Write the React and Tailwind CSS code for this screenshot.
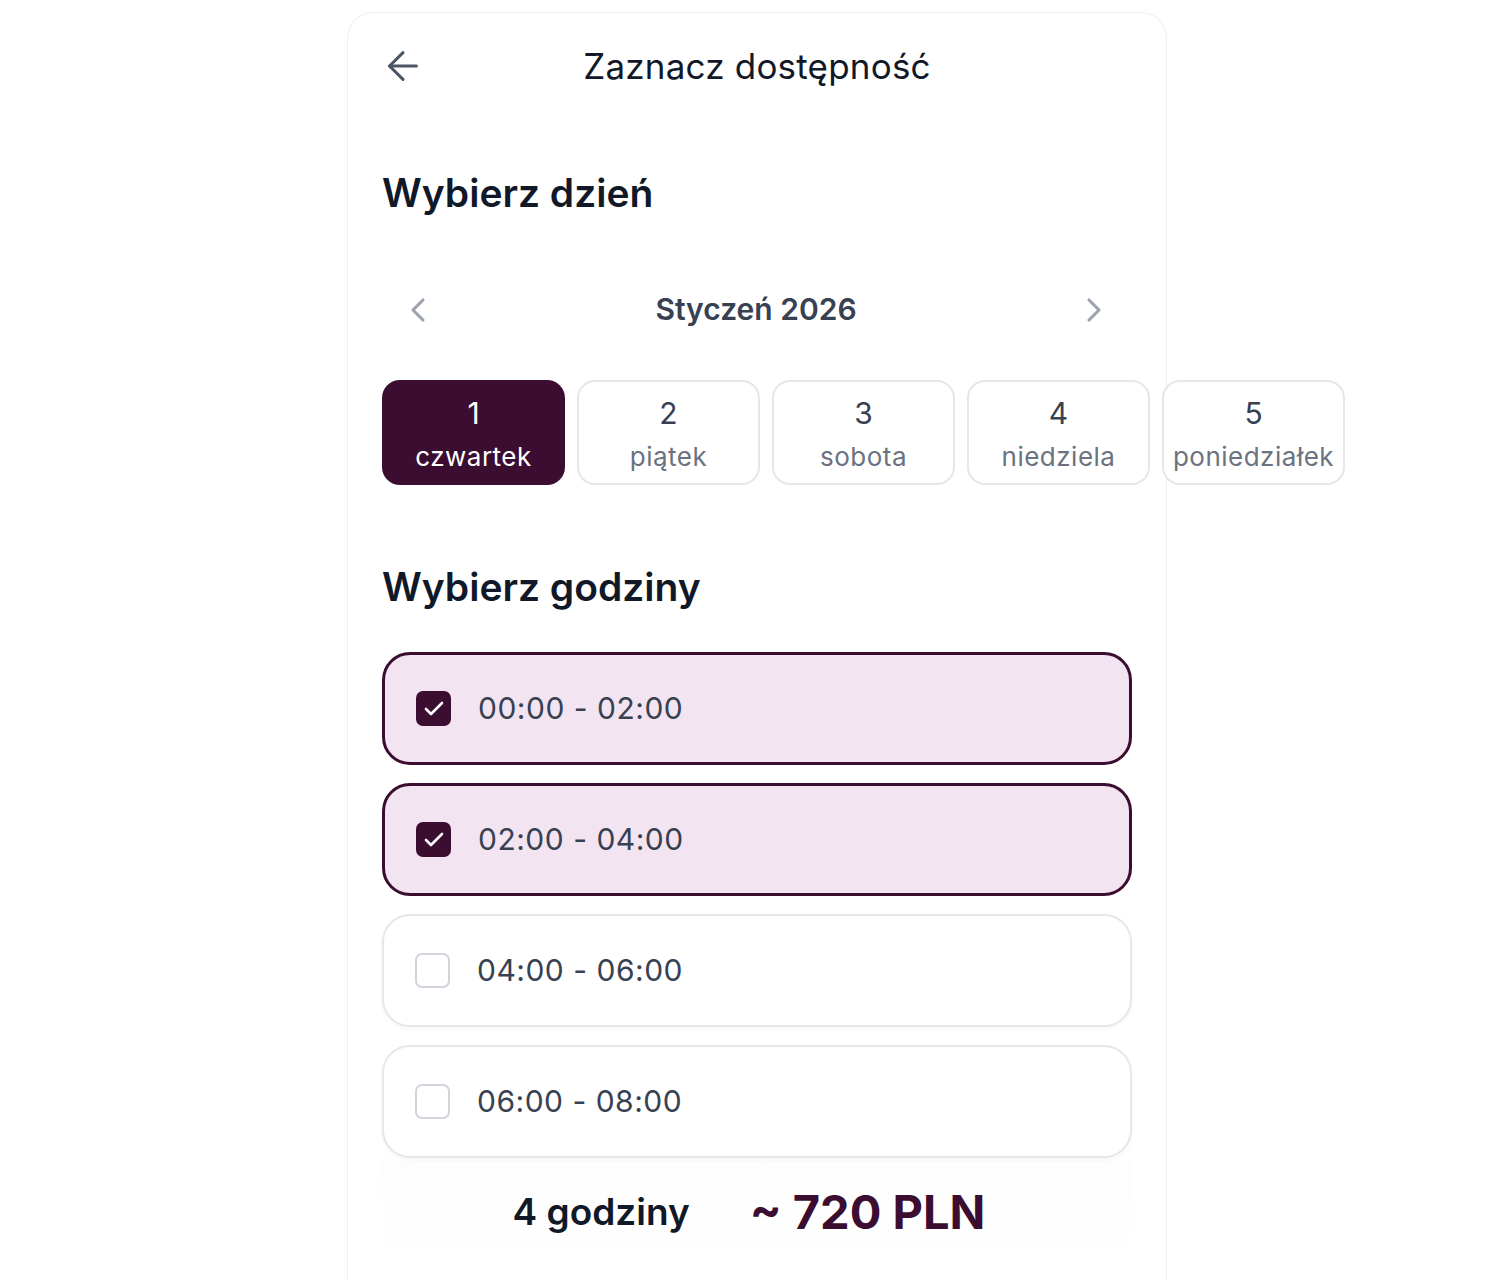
import React, { useState } from 'react';
import { ArrowLeft, ChevronLeft, ChevronRight, Check } from 'lucide-react';

const days = [
  { n: 1, name: 'czwartek' },
  { n: 2, name: 'piątek' },
  { n: 3, name: 'sobota' },
  { n: 4, name: 'niedziela' },
  { n: 5, name: 'poniedziałek' },
];

const slots = ['00:00 - 02:00', '02:00 - 04:00', '04:00 - 06:00', '06:00 - 08:00'];

const App = () => {
  const [selectedDay, setSelectedDay] = useState(1);
  const [checked, setChecked] = useState([0, 1]);

  const toggle = (i) => {
    setChecked((prev) => (prev.includes(i) ? prev.filter((x) => x !== i) : [...prev, i]));
  };

  return (
    <div className="h-[1281px] overflow-hidden bg-white font-['Inter','Noto_Sans',sans-serif]">
      <div className="ml-[347px] mt-3 w-[820px] h-[1300px] rounded-t-[26px] border border-b-0 border-[#efefef] bg-white px-[34px]">
        {/* header */}
        <header className="relative flex h-[106px] items-center justify-center">
          <button className="absolute left-[-2px] top-[30px] text-[#4b5563]">
            <ArrowLeft size={46} strokeWidth={1.6} />
          </button>
          <h1 className="text-[35px] text-[#111827] tracking-[0.2px]">Zaznacz dostępność</h1>
        </header>

        <h2 className="mt-[54px] text-[39px] font-semibold leading-none text-[#111827]">Wybierz dzień</h2>

        {/* month nav */}
        <div className="mt-[75px] flex items-center justify-between pl-[16px] pr-[18px]">
          <ChevronLeft size={40} strokeWidth={1.9} className="text-[#9ca3af]" />
          <span className="text-[30px] font-semibold text-[#374151]">Styczeń 2026</span>
          <ChevronRight size={40} strokeWidth={1.9} className="text-[#9ca3af]" />
        </div>

        {/* days */}
        <div className="mt-[48px] flex gap-[12px]">
          {days.map((d) => {
            const active = d.n === selectedDay;
            return (
              <button
                key={d.n}
                onClick={() => setSelectedDay(d.n)}
                className={`flex h-[105px] w-[183px] shrink-0 flex-col items-center justify-center rounded-[18px] ${
                  active ? 'bg-[#3b0d31] text-white' : 'border-2 border-[#e5e7eb] bg-white'
                }`}
              >
                <span className={`mt-[2px] text-[30px] leading-[40px] ${active ? 'text-white' : 'text-[#374151]'}`}>{d.n}</span>
                <span className={`mt-[7px] text-[26px] leading-[34px] tracking-[0.5px] ${active ? 'text-white' : 'text-[#6b7280]'}`}>
                  {d.name}
                </span>
              </button>
            );
          })}
        </div>

        <h2 className="mt-[82px] text-[39px] font-semibold leading-none text-[#111827]">Wybierz godziny</h2>

        {/* slots */}
        <div className="mt-[46px] flex flex-col gap-[18px]">
          {slots.map((s, i) => {
            const on = checked.includes(i);
            return (
              <button
                key={s}
                onClick={() => toggle(i)}
                className={`flex h-[113px] w-[750px] items-center gap-[27px] rounded-[28px] pl-[31px] text-left ${
                  on
                    ? 'border-[3px] border-[#3b0d31] bg-[#f3e4f2]'
                    : 'border-2 border-[#e5e7eb] bg-white shadow-[0_2px_4px_rgba(0,0,0,0.04)]'
                }`}
              >
                <span
                  className={`flex h-[35px] w-[35px] items-center justify-center rounded-[7px] ${
                    on ? 'bg-[#3b0d31]' : 'border-2 border-[#d1d5db] bg-white'
                  }`}
                >
                  {on && <Check size={24} strokeWidth={2.6} className="text-white" />}
                </span>
                <span className="text-[30px] tracking-[0.5px] text-[#374151]">{s}</span>
              </button>
            );
          })}
        </div>

        {/* footer */}
        <div className="mt-[2px] flex h-[104px] items-center justify-center gap-[60px] pr-[16px] bg-gradient-to-b from-[#fdfdfd] to-white">
          <span className="text-[37px] font-semibold text-[#111827]">4 godziny</span>
          <span className="text-[47px] font-bold text-[#3b0d31]">~ 720 PLN</span>
        </div>
      </div>
    </div>
  );
};

export default App;
